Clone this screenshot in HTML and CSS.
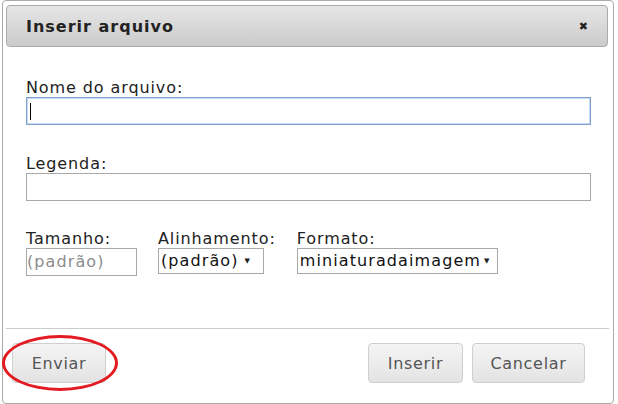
FILE: index.html
```html
<!DOCTYPE html>
<html lang="pt">
<head>
<meta charset="utf-8">
<link rel="stylesheet" href="styles.css">
</head>
<body>
<div class="dialog">
  <div class="titlebar">
    <span class="title">Inserir arquivo</span>
    <span class="close">✖</span>
  </div>
  <div class="content">
    <div class="field">
      <label class="lbl">Nome do arquivo:</label>
      <div class="input focus"><span class="caret"></span></div>
    </div>
    <div class="field">
      <label class="lbl">Legenda:</label>
      <div class="input"></div>
    </div>
    <div class="row">
      <div class="col">
        <label class="lbl">Tamanho:</label>
        <div class="small-input">(padrão)</div>
      </div>
      <div class="col">
        <label class="lbl">Alinhamento:</label>
        <div class="select sel-align">(padrão)<span class="arrow">▼</span></div>
      </div>
      <div class="col">
        <label class="lbl">Formato:</label>
        <div class="select sel-format">miniaturadaimagem<span class="arrow">▼</span></div>
      </div>
    </div>
  </div>
  <div class="footer">
    <div class="left">
      <span class="btn btn-enviar">Enviar</span>
      <span class="ring"></span>
    </div>
    <div class="right">
      <span class="btn btn-inserir">Inserir</span>
      <span class="btn btn-cancelar">Cancelar</span>
    </div>
  </div>
</div>
</body>
</html>
```
FILE: styles.css
```css
html, body {
  margin: 0;
  padding: 0;
  background: #fff;
}
body {
  font-family: "DejaVu Sans", Verdana, sans-serif;
  color: #222;
  overflow: hidden;
}
.dialog {
  box-sizing: border-box;
  width: 612px;
  height: 404px;
  margin: 0 0 0 2px;
  border: 1px solid #aaa;
  border-radius: 4px;
  padding: 4px 4px 0 3px;
  display: flex;
  flex-direction: column;
}
.titlebar {
  box-sizing: border-box;
  width: 602px;
  height: 42px;
  border: 1px solid #aaa;
  border-radius: 4px;
  background: linear-gradient(#e6e6e6, #cbcbcb);
  display: flex;
  align-items: center;
  justify-content: space-between;
  padding: 0 19px 0 19px;
}
.title {
  font-weight: bold;
  font-size: 16px;
  letter-spacing: 1px;
  color: #222;
}
.close {
  font-size: 11px;
  color: #222;
}
.content {
  padding: 32px 18px 52px 20px;
}
.field {
  margin-bottom: 30px;
}
.lbl {
  display: block;
  font-size: 16px;
  letter-spacing: 0.9px;
  line-height: 18px;
  color: #222;
}
.input {
  box-sizing: border-box;
  height: 28px;
  border: 1px solid #a9a9a9;
  background: #fff;
  position: relative;
}
.input.focus {
  border-color: #7da2ce;
  box-shadow: inset 0 0 0 1px #c9daf0;
}
.caret {
  position: absolute;
  left: 3px;
  top: 5px;
  width: 1px;
  height: 17px;
  background: #000;
}
.row {
  display: flex;
  gap: 21px;
  margin-top: -1px;
}
.col {
  display: flex;
  flex-direction: column;
}
.small-input {
  box-sizing: border-box;
  width: 111px;
  height: 28px;
  border: 1px solid #a9a9a9;
  color: #8c8c8c;
  font-size: 16px;
  letter-spacing: 1.1px;
  line-height: 26px;
  padding-left: 0;
}
.select {
  box-sizing: border-box;
  height: 26px;
  border: 1px solid #a9a9a9;
  font-size: 16px;
  letter-spacing: 1.1px;
  line-height: 24px;
  color: #111;
  padding-left: 2px;
  display: flex;
  align-items: center;
}
.sel-align { width: 106px; }
.sel-format { width: 201px; }
.arrow {
  font-size: 7px;
  margin-left: 6px;
  color: #222;
  letter-spacing: 0;
}
.sel-format .arrow { margin-left: 3px; }
.footer {
  border-top: 1px solid #ccc;
  display: flex;
  justify-content: space-between;
  align-items: flex-start;
  padding-top: 14px;
}
.left {
  position: relative;
  padding-left: 6px;
}
.right {
  display: flex;
  gap: 9px;
  padding-right: 24px;
}
.btn {
  box-sizing: border-box;
  display: inline-flex;
  align-items: center;
  justify-content: center;
  height: 40px;
  border: 1px solid #cfcfcf;
  border-radius: 4px;
  background: linear-gradient(#f4f4f4 0%, #ececec 50%, #e3e3e3 100%);
  font-size: 16px;
  letter-spacing: 0.7px;
  color: #555;
}
.btn-enviar { width: 94px; }
.btn-inserir { width: 95px; }
.btn-cancelar { width: 113px; }
.ring {
  position: absolute;
  left: -4px;
  top: -8px;
  width: 116px;
  height: 56px;
  box-sizing: border-box;
  border: 3px solid #e41a22;
  border-radius: 50%;
}
```
